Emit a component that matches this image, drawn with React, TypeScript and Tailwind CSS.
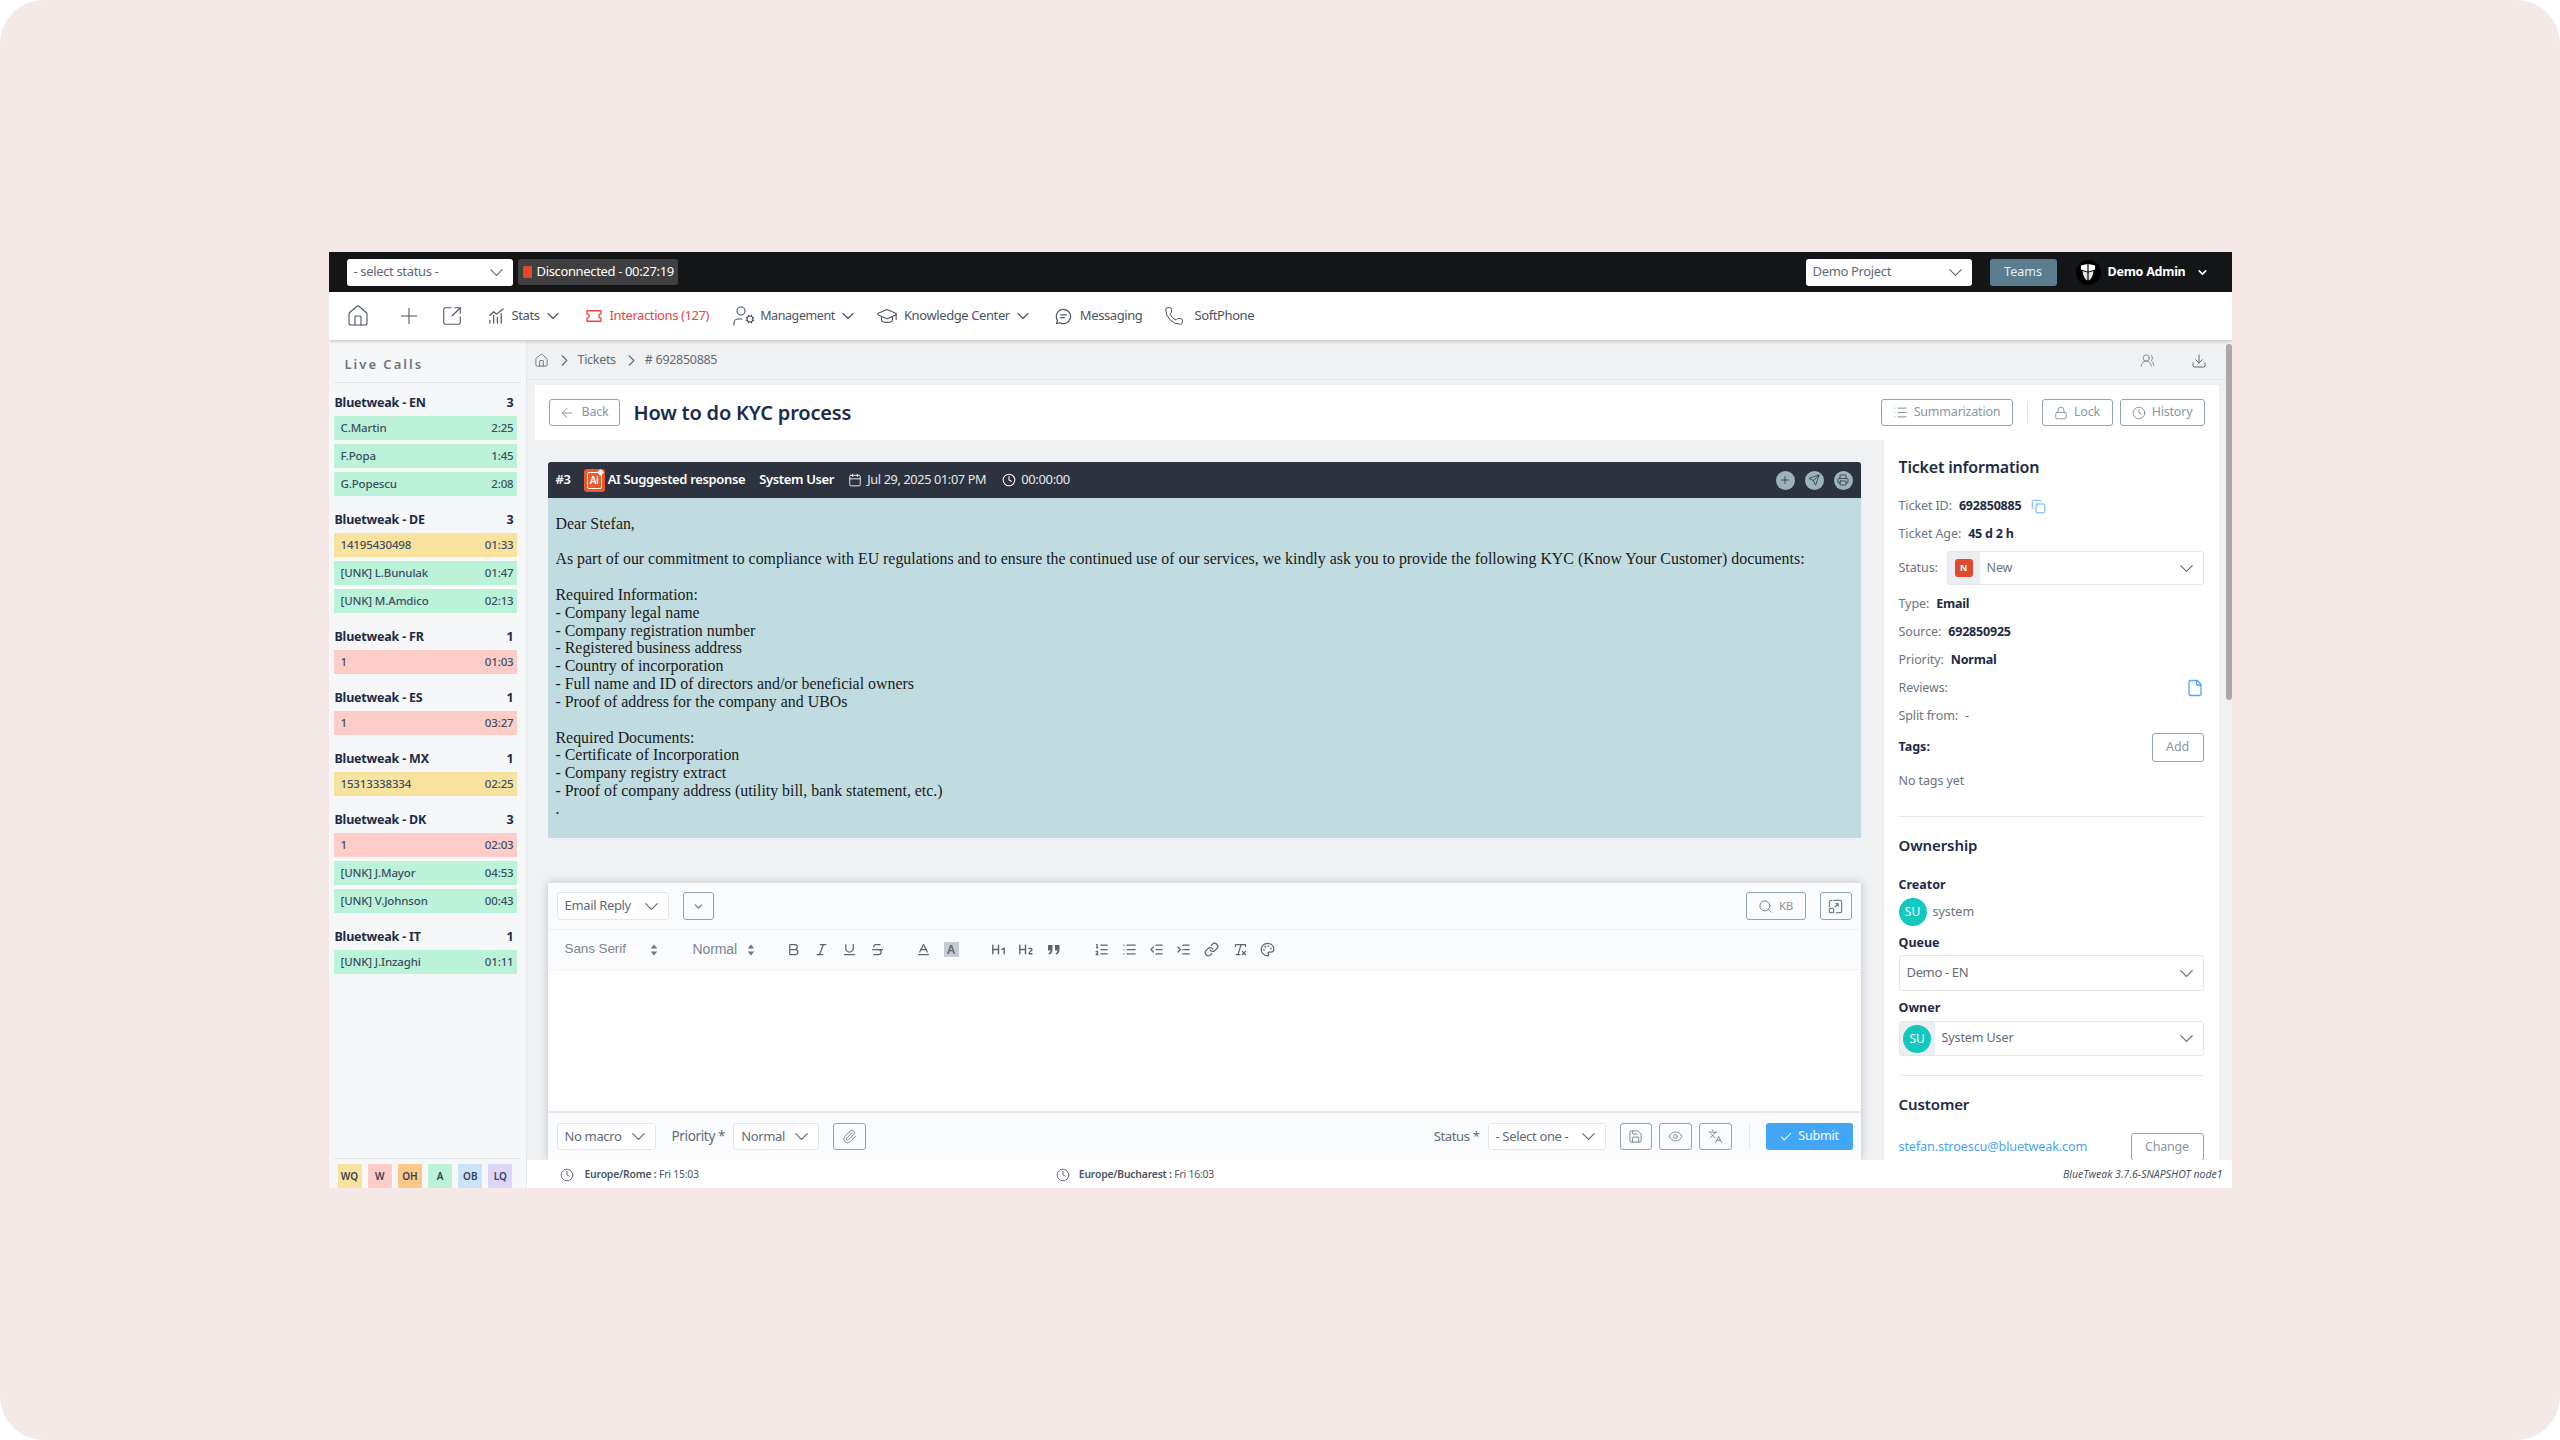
import type { ReactNode } from 'react';
import {
  ArrowLeft,
  Baseline,
  Bold,
  Calendar,
  Check,
  ChevronDown,
  ChevronRight,
  Clock,
  Copy,
  Download,
  Eye,
  File,
  GraduationCap,
  Heading1,
  Heading2,
  House,
  IndentDecrease,
  IndentIncrease,
  Italic,
  Languages,
  Link,
  List,
  ListOrdered,
  Lock,
  Palette,
  Paperclip,
  Phone,
  Plus,
  Printer,
  RemoveFormatting,
  Save,
  Search,
  Send,
  SquareArrowOutUpRight,
  Strikethrough,
  Underline,
  UserCog,
  UsersRound,
} from 'lucide-react';

const groups = [
  {
    name: 'Bluetweak - EN',
    rows: [
      ['C.Martin', '2:25', 'g'],
      ['F.Popa', '1:45', 'g'],
      ['G.Popescu', '2:08', 'g'],
    ],
  },
  {
    name: 'Bluetweak - DE',
    rows: [
      ['14195430498', '01:33', 'y'],
      ['[UNK] L.Bunulak', '01:47', 'g'],
      ['[UNK] M.Amdico', '02:13', 'g'],
    ],
  },
  { name: 'Bluetweak - FR', rows: [['1', '01:03', 'r']] },
  { name: 'Bluetweak - ES', rows: [['1', '03:27', 'r']] },
  { name: 'Bluetweak - MX', rows: [['15313338334', '02:25', 'y']] },
  {
    name: 'Bluetweak - DK',
    rows: [
      ['1', '02:03', 'r'],
      ['[UNK] J.Mayor', '04:53', 'g'],
      ['[UNK] V.Johnson', '00:43', 'g'],
    ],
  },
  { name: 'Bluetweak - IT', rows: [['[UNK] J.Inzaghi', '01:11', 'g']] },
];

const rowColor: Record<string, string> = {
  g: 'bg-[#bbf3d9]',
  y: 'bg-[#f8e39e]',
  r: 'bg-[#fecdc8]',
};

const message = `Dear Stefan,

As part of our commitment to compliance with EU regulations and to ensure the continued use of our services, we kindly ask you to provide the following KYC (Know Your Customer) documents:

Required Information:
- Company legal name
- Company registration number
- Registered business address
- Country of incorporation
- Full name and ID of directors and/or beneficial owners
- Proof of address for the company and UBOs

Required Documents:
- Certificate of Incorporation
- Company registry extract
- Proof of company address (utility bill, bank statement, etc.)
.`;

function OutlineBtn({ className, children }: { className: string; children: ReactNode }) {
  return (
    <div className={`flex h-[27px] items-center justify-center gap-[6px] rounded-[3px] border border-[#8ea4b1] text-[12.5px] tracking-[-0.2px] text-[#8a97a3] ${className}`}>
      {children}
    </div>
  );
}

function Select({ className, label }: { className: string; label: string }) {
  return (
    <div className={`flex h-[27px] items-center rounded-[3px] border border-[#e3e6ea] bg-white pl-[7px] pr-[5px] text-[13px] tracking-[-0.35px] text-[#5f6b77] ${className}`}>
      <span>{label}</span>
      <ChevronDown className="ml-auto h-[23px] w-[23px] text-[#5f6b77]" strokeWidth={1.2} />
    </div>
  );
}

function Avatar() {
  return (
    <div className="flex h-[28px] w-[28px] shrink-0 items-center justify-center rounded-full bg-[#11c9bf] text-[12px] text-white">SU</div>
  );
}

function Info({ label, value, className = 'mt-[10px]' }: { label: string; value?: string; className?: string }) {
  return (
    <div className={`flex h-[18px] items-center text-[12.5px] tracking-[-0.1px] text-[#6b7580] ${className}`}>
      <span>{label}</span>
      {value && <span className="ml-[7px] font-bold tracking-[-0.2px] text-[#1d2b45]">{value}</span>}
    </div>
  );
}

function NavChevron() {
  return <ChevronDown className="-mr-[4px] ml-[3px] h-[20px] w-[20px]" strokeWidth={1.4} />;
}

function TicketShape() {
  return (
    <svg viewBox="0 0 20 16" className="h-[14px] w-[18px] text-[#ef4444]" fill="none" stroke="currentColor" strokeWidth="1.5">
      <path d="M2 2h16v3.6a2.4 2.4 0 0 0 0 4.8V14H2v-3.6a2.4 2.4 0 0 0 0-4.8z" strokeLinejoin="round" />
    </svg>
  );
}

function StatsIcon() {
  return (
    <svg viewBox="0 0 18 18" className="h-[17px] w-[17px] text-[#4b5563]" fill="none" stroke="currentColor" strokeWidth="1.3" strokeLinecap="round" strokeLinejoin="round">
      <path d="M2 8l4-4 3 2.5L16 1" />
      <path d="M2 16v-3M6 16V8M10 16v-6M14 16V6" />
    </svg>
  );
}

function MessageIcon() {
  return (
    <svg viewBox="0 0 18 18" className="h-[17px] w-[17px] text-[#4b5563]" fill="none" stroke="currentColor" strokeWidth="1.3" strokeLinecap="round" strokeLinejoin="round">
      <path d="M9 1.5a7.5 7.5 0 1 1-3.6 14.1L1.6 16.6l1-3.6A7.5 7.5 0 0 1 9 1.5z" />
      <path d="M6 7.2h6M6 10.2h4" />
    </svg>
  );
}

function ShieldLogo() {
  return (
    <div className="flex h-[25px] w-[25px] items-center justify-center rounded-full bg-black">
      <svg viewBox="0 0 16 18" className="h-[18px] w-[16px]">
        <path d="M1 2.500L7.400 1v7.500L1 6.500zM15 2.500L8.600 1v7.500L15 6.500z" fill="#fff" />
        <path d="M2.500 8l4.900 1.600v7.900C5 16.500 3 13 2.500 8zM13.500 8L8.600 9.600v7.900C11 16.500 13 13 13.500 8z" fill="#e5e5e5" />
      </svg>
    </div>
  );
}

function AiBadge() {
  return (
    <div className="relative flex h-[23px] w-[21px] items-center justify-center rounded-[3px] bg-[#f0572a]">
      <div className="flex h-[17px] w-[15px] items-center justify-center rounded-[2px] border border-white text-[10px] font-semibold leading-none text-white">Ai</div>
      <div className="absolute right-[2px] top-[1px] h-[5px] w-[5px] rotate-45 bg-white" />
    </div>
  );
}

function ExpandIcon() {
  return (
    <svg viewBox="0 0 16 16" className="h-[15px] w-[15px] text-[#6f8794]" fill="none" stroke="currentColor" strokeWidth="1.3" strokeLinecap="round" strokeLinejoin="round">
      <path d="M6 1.500h7a1.500 1.500 0 0 1 1.500 1.500v10a1.500 1.500 0 0 1-1.500 1.500H9" />
      <path d="M1.500 8V3A1.500 1.500 0 0 1 3 1.500h1" />
      <rect x="1.500" y="10" width="4.500" height="4.500" rx="1" />
      <path d="M7.500 8.500L11 5M8.500 5H11v2.500" />
    </svg>
  );
}

function QuoteIcon() {
  return (
    <svg viewBox="0 0 14 12" className="ml-[13px] h-[12px] w-[14px] text-[#5b6670]" fill="currentColor">
      <path d="M1 1h4.500v4.500C5.500 8.500 4 10 2 10.500L1.600 9.200C2.800 8.800 3.400 7.800 3.400 6.500H1zM8 1h4.500v4.500C12.500 8.500 11 10 9 10.500L8.600 9.200C9.800 8.800 10.400 7.800 10.400 6.500H8z" />
    </svg>
  );
}

function UpDown({ className }: { className: string }) {
  return (
    <svg viewBox="0 0 8 12" className={`h-[12px] w-[8px] text-[#6b7580] ${className}`} fill="currentColor">
      <path d="M4 .500L7.200 4.500H.8zM4 11.500L.8 7.500h6.400z" />
    </svg>
  );
}

function Sidebar() {
  return (
    <aside className="flex h-full w-[198px] shrink-0 flex-col border-r border-[#e6e8eb] bg-[#f6f7f9]">
      <div className="mx-[5px] flex h-[43px] items-center border-b border-[#e5e7ea] pl-[11px] pt-[8px] text-[13px] font-semibold tracking-[2px] text-[#6b7580]">
        Live Calls
      </div>
      <div className="flex flex-col gap-[11.5px] pl-[5px] pr-[9px] pt-[7px]">
        {groups.map((g) => (
          <div key={g.name}>
            <div className="flex h-[26px] items-center justify-between pl-[1px] pr-[3px] text-[12.5px] font-bold tracking-[-0.2px] text-[#1d2b45]">
              <span>{g.name}</span>
              <span>{g.rows.length}</span>
            </div>
            <div className="flex flex-col gap-[4.500px]">
              {g.rows.map(([name, time, color]) => (
                <div key={name + time} className={`flex h-[23.500px] items-center justify-between pl-[7px] pr-[3px] text-[11.5px] font-medium tracking-[-0.15px] text-[#3d4d63] ${rowColor[color]}`}>
                  <span>{name}</span>
                  <span>{time}</span>
                </div>
              ))}
            </div>
          </div>
        ))}
      </div>
      <div className="mx-[5px] mt-auto flex h-[30px] items-start justify-between border-t border-[#e5e7ea] pl-[4px] pr-[8px] pt-[5px] text-[10px] font-semibold text-[#3b4252]">
        {[
          ['WQ', 'bg-[#f8e3a0]'],
          ['W', 'bg-[#fecdc8]'],
          ['OH', 'bg-[#fec889]'],
          ['A', 'bg-[#bbf3d9]'],
          ['OB', 'bg-[#cbe2fb]'],
          ['LQ', 'bg-[#ddd6fb]'],
        ].map(([t, c]) => (
          <div key={t} className={`flex h-[24px] w-[24px] items-center justify-center ${c}`}>{t}</div>
        ))}
      </div>
    </aside>
  );
}

function Thread() {
  return (
    <div className="ml-[13px] mr-[22px] mt-[22px] rounded-t-[3px]">
      <div className="flex h-[36px] items-center rounded-t-[3px] bg-[#2d333e] pl-[8px] pr-[8px] text-[13px] tracking-[-0.35px] text-white">
        <span className="font-semibold">#3</span>
        <div className="ml-[13px]"><AiBadge /></div>
        <span className="ml-[3px] font-semibold">AI Suggested response</span>
        <span className="ml-[14px] font-semibold">System User</span>
        <Calendar className="ml-[14px] h-[14px] w-[14px]" strokeWidth={1.5} />
        <span className="ml-[5px] text-[12.700px] font-normal text-[#e5e7eb]">Jul 29, 2025 01:07 PM</span>
        <Clock className="ml-[16px] h-[14px] w-[14px]" strokeWidth={1.8} />
        <span className="ml-[5px] text-[#e5e7eb]">00:00:00</span>
        <div className="ml-auto flex gap-[10px]">
          {[Plus, Send, Printer].map((Icon, i) => (
            <div key={i} className="flex h-[19px] w-[19px] items-center justify-center rounded-full bg-[#9db3bb]">
              <Icon className="h-[12px] w-[12px] text-[#2d333e]" strokeWidth={1.6} />
            </div>
          ))}
        </div>
      </div>
      <div className="h-[340px] whitespace-pre-wrap bg-[#c1dce0] px-[8px] pt-[16.500px] text-[15.880px] leading-[17.850px] text-[#1a1a1a] [font-family:'Liberation_Serif',serif]">
        {message}
      </div>
    </div>
  );
}

function Toolbar() {
  const cls = 'h-[15px] w-[15px] text-[#5b6670]';
  return (
    <div className="flex h-[41px] items-center border-y border-[#eef0f2] bg-[#fafbfc] text-[#7b8590]">
      <span className="ml-[17px] w-[64px] text-[13.500px] tracking-[-0.1px] [font-family:'Liberation_Sans',sans-serif]">Sans Serif</span>
      <UpDown className="ml-[21px]" />
      <span className="ml-[35px] w-[45px] text-[14px] tracking-[-0.1px] [font-family:'Liberation_Sans',sans-serif]">Normal</span>
      <UpDown className="ml-[9px]" />
      <Bold className={`ml-[31px] ${cls}`} />
      <Italic className={`ml-[13px] ${cls}`} />
      <Underline className={`ml-[13px] ${cls}`} />
      <Strikethrough className={`ml-[13px] ${cls}`} />
      <Baseline className={`ml-[31px] ${cls}`} />
      <div className="ml-[13px] flex h-[15px] w-[15px] items-center justify-center bg-[#c8ccd0] text-[12px] font-semibold text-[#5b6670]">A</div>
      <Heading1 className={`ml-[31px] h-[17px] w-[17px] text-[#5b6670]`} />
      <Heading2 className={`ml-[10px] h-[17px] w-[17px] text-[#5b6670]`} />
      <QuoteIcon />
      <ListOrdered className={`ml-[33px] ${cls}`} />
      <List className={`ml-[13px] ${cls}`} />
      <IndentDecrease className={`ml-[12px] ${cls}`} />
      <IndentIncrease className={`ml-[12px] ${cls}`} />
      <Link className={`ml-[13px] ${cls}`} />
      <RemoveFormatting className={`ml-[14px] ${cls}`} />
      <Palette className={`ml-[12px] ${cls}`} />
    </div>
  );
}

function Editor() {
  return (
    <div className="ml-[13px] mr-[22px] mt-[45px] flex h-[277px] flex-col bg-white shadow-[0_0_8px_rgba(70,80,95,0.3)]">
      <div className="flex h-[46px] items-center bg-[#fafbfc] pl-[9px] pr-[9px]">
        <Select className="h-[28px] w-[112px]" label="Email Reply" />
        <OutlineBtn className="ml-[14px] h-[28px] w-[31px]">
          <ChevronDown className="h-[13px] w-[13px] text-[#5f7583]" strokeWidth={2} />
        </OutlineBtn>
        <OutlineBtn className="ml-auto h-[28px] w-[60px]">
          <Search className="h-[15px] w-[15px] text-[#6f8794]" strokeWidth={1.6} />
          <span className="text-[11.500px]">KB</span>
        </OutlineBtn>
        <OutlineBtn className="ml-[14px] h-[28px] w-[32px]">
          <ExpandIcon />
        </OutlineBtn>
      </div>
      <Toolbar />
      <div className="h-[141px] bg-white" />
      <div className="flex flex-1 items-center border-t-2 border-[#e6e9ec] bg-[#fafbfc] pl-[9px] pr-[8px]">
        <Select className="w-[99px]" label="No macro" />
        <span className="ml-[16px] text-[13.500px] tracking-[-0.35px] text-[#5f6b77]">Priority *</span>
        <Select className="ml-[8px] w-[86px]" label="Normal" />
        <OutlineBtn className="ml-[14px] w-[33px]">
          <Paperclip className="h-[15px] w-[15px] text-[#6f8794]" strokeWidth={1.5} />
        </OutlineBtn>
        <span className="ml-auto text-[13px] tracking-[-0.35px] text-[#5f6b77]">Status *</span>
        <Select className="ml-[8px] w-[118px]" label="- Select one -" />
        <OutlineBtn className="ml-[14px] w-[32px]">
          <Save className="h-[15px] w-[15px] text-[#6f8794]" strokeWidth={1.5} />
        </OutlineBtn>
        <OutlineBtn className="ml-[7px] w-[33px]">
          <Eye className="h-[15px] w-[15px] text-[#6f8794]" strokeWidth={1.5} />
        </OutlineBtn>
        <OutlineBtn className="ml-[7px] w-[33px]">
          <Languages className="h-[15px] w-[15px] text-[#6f8794]" strokeWidth={1.5} />
        </OutlineBtn>
        <div className="ml-[17px] h-[27px] w-px bg-[#e3e6ea]" />
        <div className="ml-[16px] flex h-[27px] w-[87px] items-center justify-center gap-[5px] rounded-[3px] bg-[#42a5f5] text-[12.5px] tracking-[-0.2px] text-white">
          <Check className="h-[14px] w-[14px]" strokeWidth={1.8} />
          Submit
        </div>
      </div>
    </div>
  );
}

function Details() {
  return (
    <div className="h-full w-[336px] shrink-0 overflow-hidden border-l border-[#eceef0] bg-white pl-[15px] pr-[15px]">
      <div className="flex h-[38px] items-end text-[16px] font-semibold leading-[22px] tracking-[-0.2px] text-[#1d2b45]">Ticket information</div>
      <div className="mt-[19px] flex h-[18px] items-center text-[12.5px] tracking-[-0.1px] text-[#6b7580]">
        <span>Ticket ID:</span>
        <span className="ml-[7px] font-bold tracking-[-0.2px] text-[#1d2b45]">692850885</span>
        <Copy className="ml-[10px] h-[15px] w-[15px] text-[#5aa9f0]" strokeWidth={1.5} />
      </div>
      <Info label="Ticket Age:" value="45 d 2 h" />
      <div className="mt-[8px] flex h-[34px] items-center text-[12.5px] tracking-[-0.1px] text-[#6b7580]">
        <span className="w-[48px]">Status:</span>
        <div className="flex h-full flex-1 items-center overflow-hidden rounded-[3px] border border-[#e3e6ea] pr-[5px]">
          <div className="flex h-full w-[32px] items-center justify-center bg-[#eceef1]">
            <div className="flex h-[18px] w-[18px] items-center justify-center rounded-[3px] bg-[#e0492e] text-[9px] font-bold text-white">N</div>
          </div>
          <span className="ml-[7px]">New</span>
          <ChevronDown className="ml-auto h-[23px] w-[23px] text-[#5f6b77]" strokeWidth={1.2} />
        </div>
      </div>
      <Info label="Type:" value="Email" />
      <Info label="Source:" value="692850925" />
      <Info label="Priority:" value="Normal" />
      <div className="mt-[10px] flex h-[18px] items-center justify-between text-[12.5px] tracking-[-0.1px] text-[#6b7580]">
        <span>Reviews:</span>
        <File className="h-[18px] w-[18px] text-[#4da3f2]" strokeWidth={1.7} />
      </div>
      <div className="mt-[10px] flex h-[18px] items-center gap-[7px] text-[12.5px] tracking-[-0.1px] text-[#6b7580]">
        <span>Split from:</span>
        <span>-</span>
      </div>
      <div className="mt-[8px] flex h-[29px] items-center justify-between text-[12.5px] font-bold text-[#1d2b45]">
        <span>Tags:</span>
        <OutlineBtn className="h-[29px] w-[52px] font-normal">Add</OutlineBtn>
      </div>
      <div className="mt-[10px] flex h-[18px] items-center text-[12.5px] tracking-[-0.1px] text-[#6b7580]">No tags yet</div>
      <div className="mt-[26px] h-px bg-[#e6e8eb]" />
      <div className="mt-[18px] text-[15px] font-semibold leading-[20px] tracking-[-0.1px] text-[#1d2b45]">Ownership</div>
      <div className="mt-[21px] text-[12.5px] font-bold leading-[18px] text-[#1d2b45]">Creator</div>
      <div className="mt-[4px] flex items-center gap-[6px] text-[12.5px] text-[#6b7580]">
        <Avatar />
        system
      </div>
      <div className="mt-[8px] text-[12.5px] font-bold leading-[18px] text-[#1d2b45]">Queue</div>
      <Select className="mt-[3px] h-[36px] w-full" label="Demo - EN" />
      <div className="mt-[8px] text-[12.5px] font-bold leading-[18px] text-[#1d2b45]">Owner</div>
      <div className="mt-[4px] flex h-[35px] items-center overflow-hidden rounded-[3px] border border-[#e3e6ea] pr-[5px] text-[12.5px] tracking-[-0.1px] text-[#5f6b77]">
        <div className="flex h-full w-[35px] items-center justify-center bg-[#eceef1]">
          <Avatar />
        </div>
        <span className="ml-[7px]">System User</span>
        <ChevronDown className="ml-auto h-[23px] w-[23px]" strokeWidth={1.2} />
      </div>
      <div className="mt-[19px] h-px bg-[#e6e8eb]" />
      <div className="mt-[18px] text-[15px] font-semibold leading-[20px] tracking-[-0.1px] text-[#1d2b45]">Customer</div>
      <div className="mt-[19px] flex items-center justify-between">
        <span className="text-[12.700px] tracking-[-0.15px] text-[#4da3f2]">stefan.stroescu@bluetweak.com</span>
        <OutlineBtn className="h-[28px] w-[73px]">Change</OutlineBtn>
      </div>
    </div>
  );
}

export default function App() {
  return (
    <div className="h-[1440px] w-full bg-white [font-family:'Noto_Sans',sans-serif]">
      <div className="flex h-full w-full items-center justify-center rounded-[44px] bg-[#f5e9e7]">
        <div className="flex h-[936px] w-[1903px] flex-col overflow-hidden bg-white">
          <header className="flex h-[40px] shrink-0 items-center bg-[#141517] pl-[18px] pr-[23px]">
            <Select className="w-[166px] border-0" label="- select status -" />
            <div className="ml-[5px] flex h-[26px] w-[160px] items-center rounded-[3px] bg-[#3f3f41] pl-[5px] text-[13px] tracking-[-0.35px] text-white">
              <div className="h-[12px] w-[9px] rounded-[1px] bg-[#e0492e]" />
              <span className="ml-[5px]">Disconnected - 00:27:19</span>
            </div>
            <Select className="ml-auto w-[166px] border-0" label="Demo Project" />
            <div className="ml-[18px] flex h-[27px] w-[67px] items-center justify-center rounded-[3px] bg-[#5b7c8d] text-[12.5px] text-[#e8eef1]">Teams</div>
            <div className="ml-[19px]"><ShieldLogo /></div>
            <span className="ml-[7px] text-[12.5px] font-bold tracking-[-0.25px] text-white">Demo Admin</span>
            <ChevronDown className="ml-[10px] h-[13px] w-[13px] text-white" strokeWidth={3} />
          </header>

          <nav className="relative z-10 flex h-[48px] shrink-0 items-center bg-white pl-[17px] text-[13px] tracking-[-0.4px] text-[#4b5563] shadow-[0_1px_4px_rgba(0,0,0,0.22)]">
            <House className="h-[24px] w-[24px] text-[#4b5563]" strokeWidth={1.1} />
            <Plus className="ml-[26px] h-[26px] w-[26px]" strokeWidth={1} />
            <SquareArrowOutUpRight className="ml-[19px] h-[22px] w-[22px]" strokeWidth={1.2} />
            <div className="ml-[25px]"><StatsIcon /></div>
            <span className="ml-[7px]">Stats</span>
            <NavChevron />
            <div className="ml-[26px]"><TicketShape /></div>
            <span className="ml-[7px] text-[#ef4444]">Interactions (127)</span>
            <UserCog className="ml-[23px] h-[24px] w-[24px]" strokeWidth={1.1} />
            <span className="ml-[4px] text-[12.5px]">Management</span>
            <NavChevron />
            <GraduationCap className="ml-[22px] h-[22px] w-[22px]" strokeWidth={1.2} />
            <span className="ml-[6px]">Knowledge Center</span>
            <NavChevron />
            <div className="ml-[26px]"><MessageIcon /></div>
            <span className="ml-[8px]">Messaging</span>
            <Phone className="ml-[22px] h-[20px] w-[20px]" strokeWidth={1.2} />
            <span className="-mt-px ml-[10px]">SoftPhone</span>
          </nav>

          <div className="flex min-h-0 flex-1">
            <Sidebar />
            <div className="flex min-w-0 flex-1 flex-col bg-[#f0f1f3]">
              <div className="flex min-h-0 flex-1">
                <div className="flex min-w-0 flex-1 flex-col">
                  <div className="flex h-[40px] shrink-0 items-center border-b border-[#e5e7ea] pl-[7px] pr-[19px] pt-[2px] text-[12.5px] tracking-[-0.3px] text-[#5f6b77]">
                    <House className="h-[15px] w-[15px]" strokeWidth={1.4} />
                    <ChevronRight className="ml-[6px] h-[19px] w-[19px]" strokeWidth={1.4} />
                    <span className="ml-[4px]">Tickets</span>
                    <ChevronRight className="ml-[6px] h-[19px] w-[19px]" strokeWidth={1.4} />
                    <span className="ml-[4px]"># 692850885</span>
                    <UsersRound className="ml-auto h-[15px] w-[15px] text-[#7b8590]" strokeWidth={1.4} />
                    <Download className="ml-[36px] h-[16px] w-[16px] text-[#5f6b77]" strokeWidth={1.5} />
                  </div>
                  <div className="ml-[8px] mr-[7px] mt-[5px] flex h-[55px] shrink-0 items-center bg-white pl-[14px] pr-[14px]">
                    <OutlineBtn className="w-[71px]">
                      <ArrowLeft className="h-[16px] w-[16px] text-[#7d93a1]" strokeWidth={1.4} />
                      Back
                    </OutlineBtn>
                    <h1 className="ml-[14px] text-[20px] font-semibold tracking-[-0.2px] text-[#1a2b4c]">How to do KYC process</h1>
                    <OutlineBtn className="ml-auto w-[132px]">
                      <List className="h-[15px] w-[15px] text-[#6f8794]" strokeWidth={1.4} />
                      Summarization
                    </OutlineBtn>
                    <div className="ml-[14px] h-[19px] w-px bg-[#dfe2e6]" />
                    <OutlineBtn className="ml-[14px] w-[71px]">
                      <Lock className="h-[14px] w-[14px] text-[#6f8794]" strokeWidth={1.4} />
                      Lock
                    </OutlineBtn>
                    <OutlineBtn className="ml-[7px] w-[85px]">
                      <Clock className="h-[14px] w-[14px] text-[#6f8794]" strokeWidth={1.4} />
                      History
                    </OutlineBtn>
                  </div>
                  <div className="ml-[8px] mr-[7px] flex min-h-0 flex-1 overflow-hidden">
                    <div className="min-w-0 flex-1">
                      <Thread />
                      <Editor />
                    </div>
                    <Details />
                  </div>
                </div>
                <div className="w-[6px] shrink-0 pt-[4px]">
                  <div className="h-[356px] rounded-[3px] bg-[#a9a9a9]" />
                </div>
              </div>
              <footer className="relative z-10 flex h-[28px] shrink-0 items-center bg-white pl-[33px] pr-[9px] pt-[2px] text-[10.400px] tracking-[-0.2px] text-[#4b5563]">
                <Clock className="h-[14px] w-[14px]" strokeWidth={1.4} />
                <span className="ml-[11px]"><b className="font-semibold">Europe/Rome :</b> Fri 15:03</span>
                <Clock className="ml-[357px] h-[14px] w-[14px]" strokeWidth={1.4} />
                <span className="ml-[9px]"><b className="font-semibold">Europe/Bucharest :</b> Fri 16:03</span>
                <span className="ml-auto text-[10.500px] italic tracking-[0px]">BlueTweak 3.7.6-SNAPSHOT node1</span>
              </footer>
            </div>
          </div>
        </div>
      </div>
    </div>
  );
}
